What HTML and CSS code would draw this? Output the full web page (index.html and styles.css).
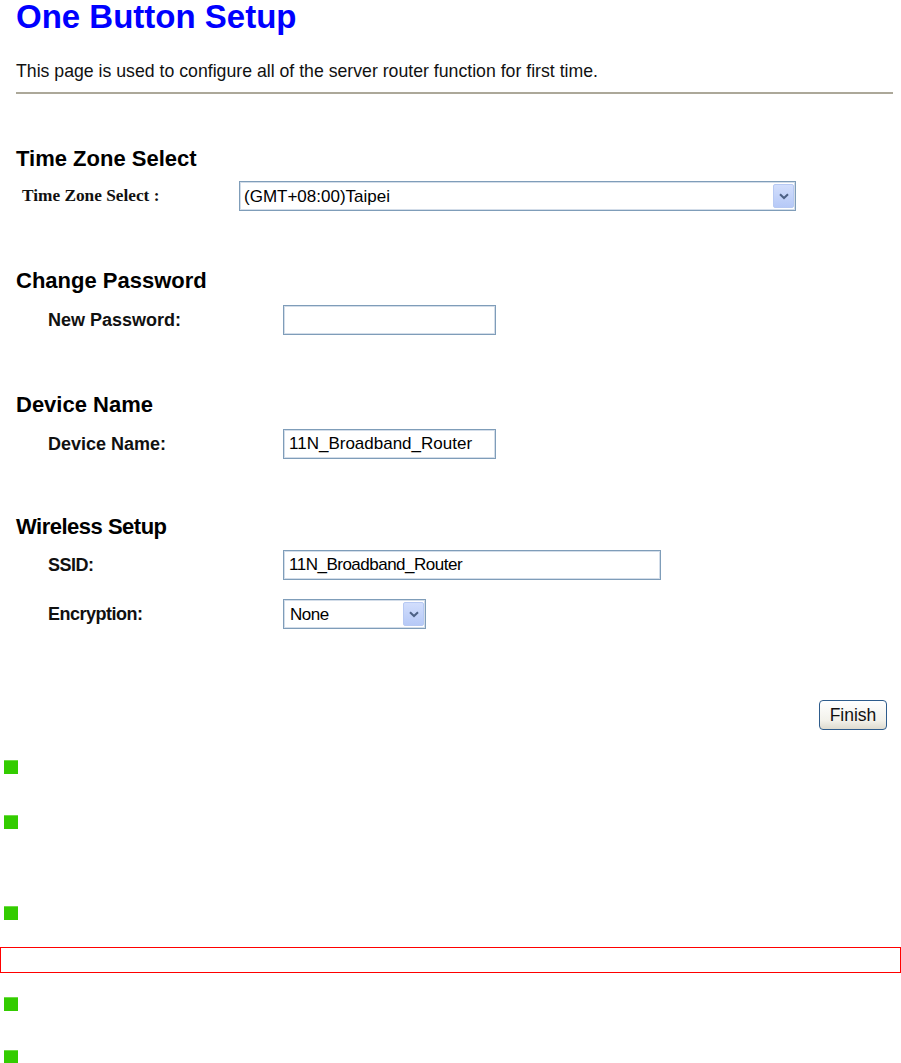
FILE: index.html
```html
<!DOCTYPE html>
<html lang="en">
<head>
    <meta charset="UTF-8">
    <title>One Button Setup</title>
    <link rel="stylesheet" href="styles.css">
</head>
<body>
    <div class="page">
        <h1>One Button Setup</h1>
        <p class="intro">This page is used to configure all of the server router function for first time.</p>
        <hr>

        <section class="block first">
            <h2>Time Zone Select</h2>
            <div class="row tz-row">
                <label class="tz-label">Time Zone Select :</label>
                <span class="select-wrap tz-select">
                    <select>
                        <option>(GMT+08:00)Taipei</option>
                    </select>
                    <span class="arrow"><svg width="10" height="7" viewBox="0 0 10 7"><path d="M1 1.2 L5 5 L9 1.2" fill="none" stroke="#4d6185" stroke-width="2"/></svg></span>
                </span>
            </div>
        </section>

        <section class="block">
            <h2>Change Password</h2>
            <div class="row">
                <label>New Password:</label>
                <input type="password" class="field short">
            </div>
        </section>

        <section class="block">
            <h2>Device Name</h2>
            <div class="row">
                <label>Device Name:</label>
                <input type="text" class="field short" value="11N_Broadband_Router">
            </div>
        </section>

        <section class="block wireless">
            <h2 class="narrow">Wireless Setup</h2>
            <div class="row">
                <label class="narrow">SSID:</label>
                <input type="text" class="field long narrow" value="11N_Broadband_Router">
            </div>
            <div class="row second">
                <label class="narrow">Encryption:</label>
                <span class="select-wrap enc-select">
                    <select class="narrow">
                        <option>None</option>
                    </select>
                    <span class="arrow"><svg width="10" height="7" viewBox="0 0 10 7"><path d="M1 1.2 L5 5 L9 1.2" fill="none" stroke="#4d6185" stroke-width="2"/></svg></span>
                </span>
            </div>
        </section>

        <div class="actions">
            <button type="button">Finish</button>
        </div>
    </div>

    <div class="notes">
        <div class="bullet b1"></div>
        <div class="bullet b2"></div>
        <div class="bullet b3"></div>
        <div class="red-box"></div>
        <div class="bullet b4"></div>
        <div class="bullet b5"></div>
    </div>
</body>
</html>
```

FILE: styles.css
```css
* {
    margin: 0;
    padding: 0;
    box-sizing: border-box;
}

body {
    font-family: "Liberation Sans", Arial, sans-serif;
    color: #000;
    background: #fff;
}

.page {
    padding: 0 8px 0 16px;
}

h1 {
    font-size: 33px;
    line-height: 33px;
    font-weight: bold;
    color: #0000ff;
}

.intro {
    margin-top: 28px;
    font-size: 17.7px;
    line-height: 20px;
    color: #111;
}

hr {
    margin-top: 11px;
    border: none;
    border-top: 2px solid #aca899;
}

.block {
    margin-top: 58px;
}

.block.first {
    margin-top: 53px;
}

.block.wireless {
    margin-top: 56px;
}

h2 {
    font-size: 22px;
    line-height: 24px;
    font-weight: bold;
}

.row {
    display: flex;
    align-items: center;
    height: 30px;
    margin-top: 12px;
}

.wireless .row {
    margin-top: 11px;
}

.wireless .row.second {
    margin-top: 19px;
}

.row label {
    width: 267px;
    padding-left: 32px;
    font-size: 18px;
    line-height: 20px;
    font-weight: bold;
    color: #111;
}

.narrow,
.row label.narrow {
    letter-spacing: -0.5px;
}

.tz-row {
    margin-top: 10px;
}

.row .tz-label {
    width: 223px;
    padding-left: 6px;
    font-family: "Liberation Serif", "Times New Roman", serif;
    font-size: 17.3px;
}

.field {
    height: 30px;
    border: 1px solid #7f9db9;
    box-shadow: inset 0 0 0 1px #d3dde9;
    padding: 0 5px;
    font-family: "Liberation Sans", Arial, sans-serif;
    font-size: 17px;
    color: #000;
    outline: none;
}

.field.short {
    width: 213px;
}

.field.long {
    width: 378px;
}

.select-wrap {
    position: relative;
    display: inline-block;
    height: 30px;
}

.select-wrap select {
    appearance: none;
    -webkit-appearance: none;
    width: 100%;
    height: 30px;
    border: 1px solid #7f9db9;
    box-shadow: inset 0 0 0 1px #d3dde9;
    background: #fff;
    padding: 0 4px;
    font-family: "Liberation Sans", Arial, sans-serif;
    font-size: 17px;
    color: #000;
    outline: none;
}

.tz-select {
    width: 557px;
}

.enc-select {
    width: 143px;
}

.enc-select select {
    padding-left: 6px;
}

.arrow {
    position: absolute;
    top: 3px;
    right: 2px;
    width: 21px;
    height: 24px;
    border: 1px solid #b7c9f3;
    border-radius: 2px;
    background: linear-gradient(#d2defc, #b6c9f7);
    display: flex;
    align-items: center;
    justify-content: center;
    pointer-events: none;
}

.actions {
    display: flex;
    justify-content: flex-end;
    margin-top: 71px;
    padding-right: 6px;
}

button {
    width: 68px;
    height: 30px;
    border: 1px solid #2e5c8c;
    border-radius: 4px;
    background: linear-gradient(#ffffff, #f2f1ea 70%, #dedbcf);
    font-family: "Liberation Sans", Arial, sans-serif;
    font-size: 17.5px;
    color: #111;
    cursor: pointer;
}

.bullet {
    width: 14px;
    height: 14px;
    margin-left: 4px;
    background: #33cc00;
    border-top: 1px solid #6fdc47;
}

.b1 {
    margin-top: 30px;
}

.b2 {
    margin-top: 41px;
}

.b3 {
    margin-top: 77px;
}

.red-box {
    margin-top: 27px;
    width: 901px;
    height: 26px;
    border: 1px solid #ff0000;
}

.b4 {
    margin-top: 24px;
}

.b5 {
    margin-top: 39px;
}
```
